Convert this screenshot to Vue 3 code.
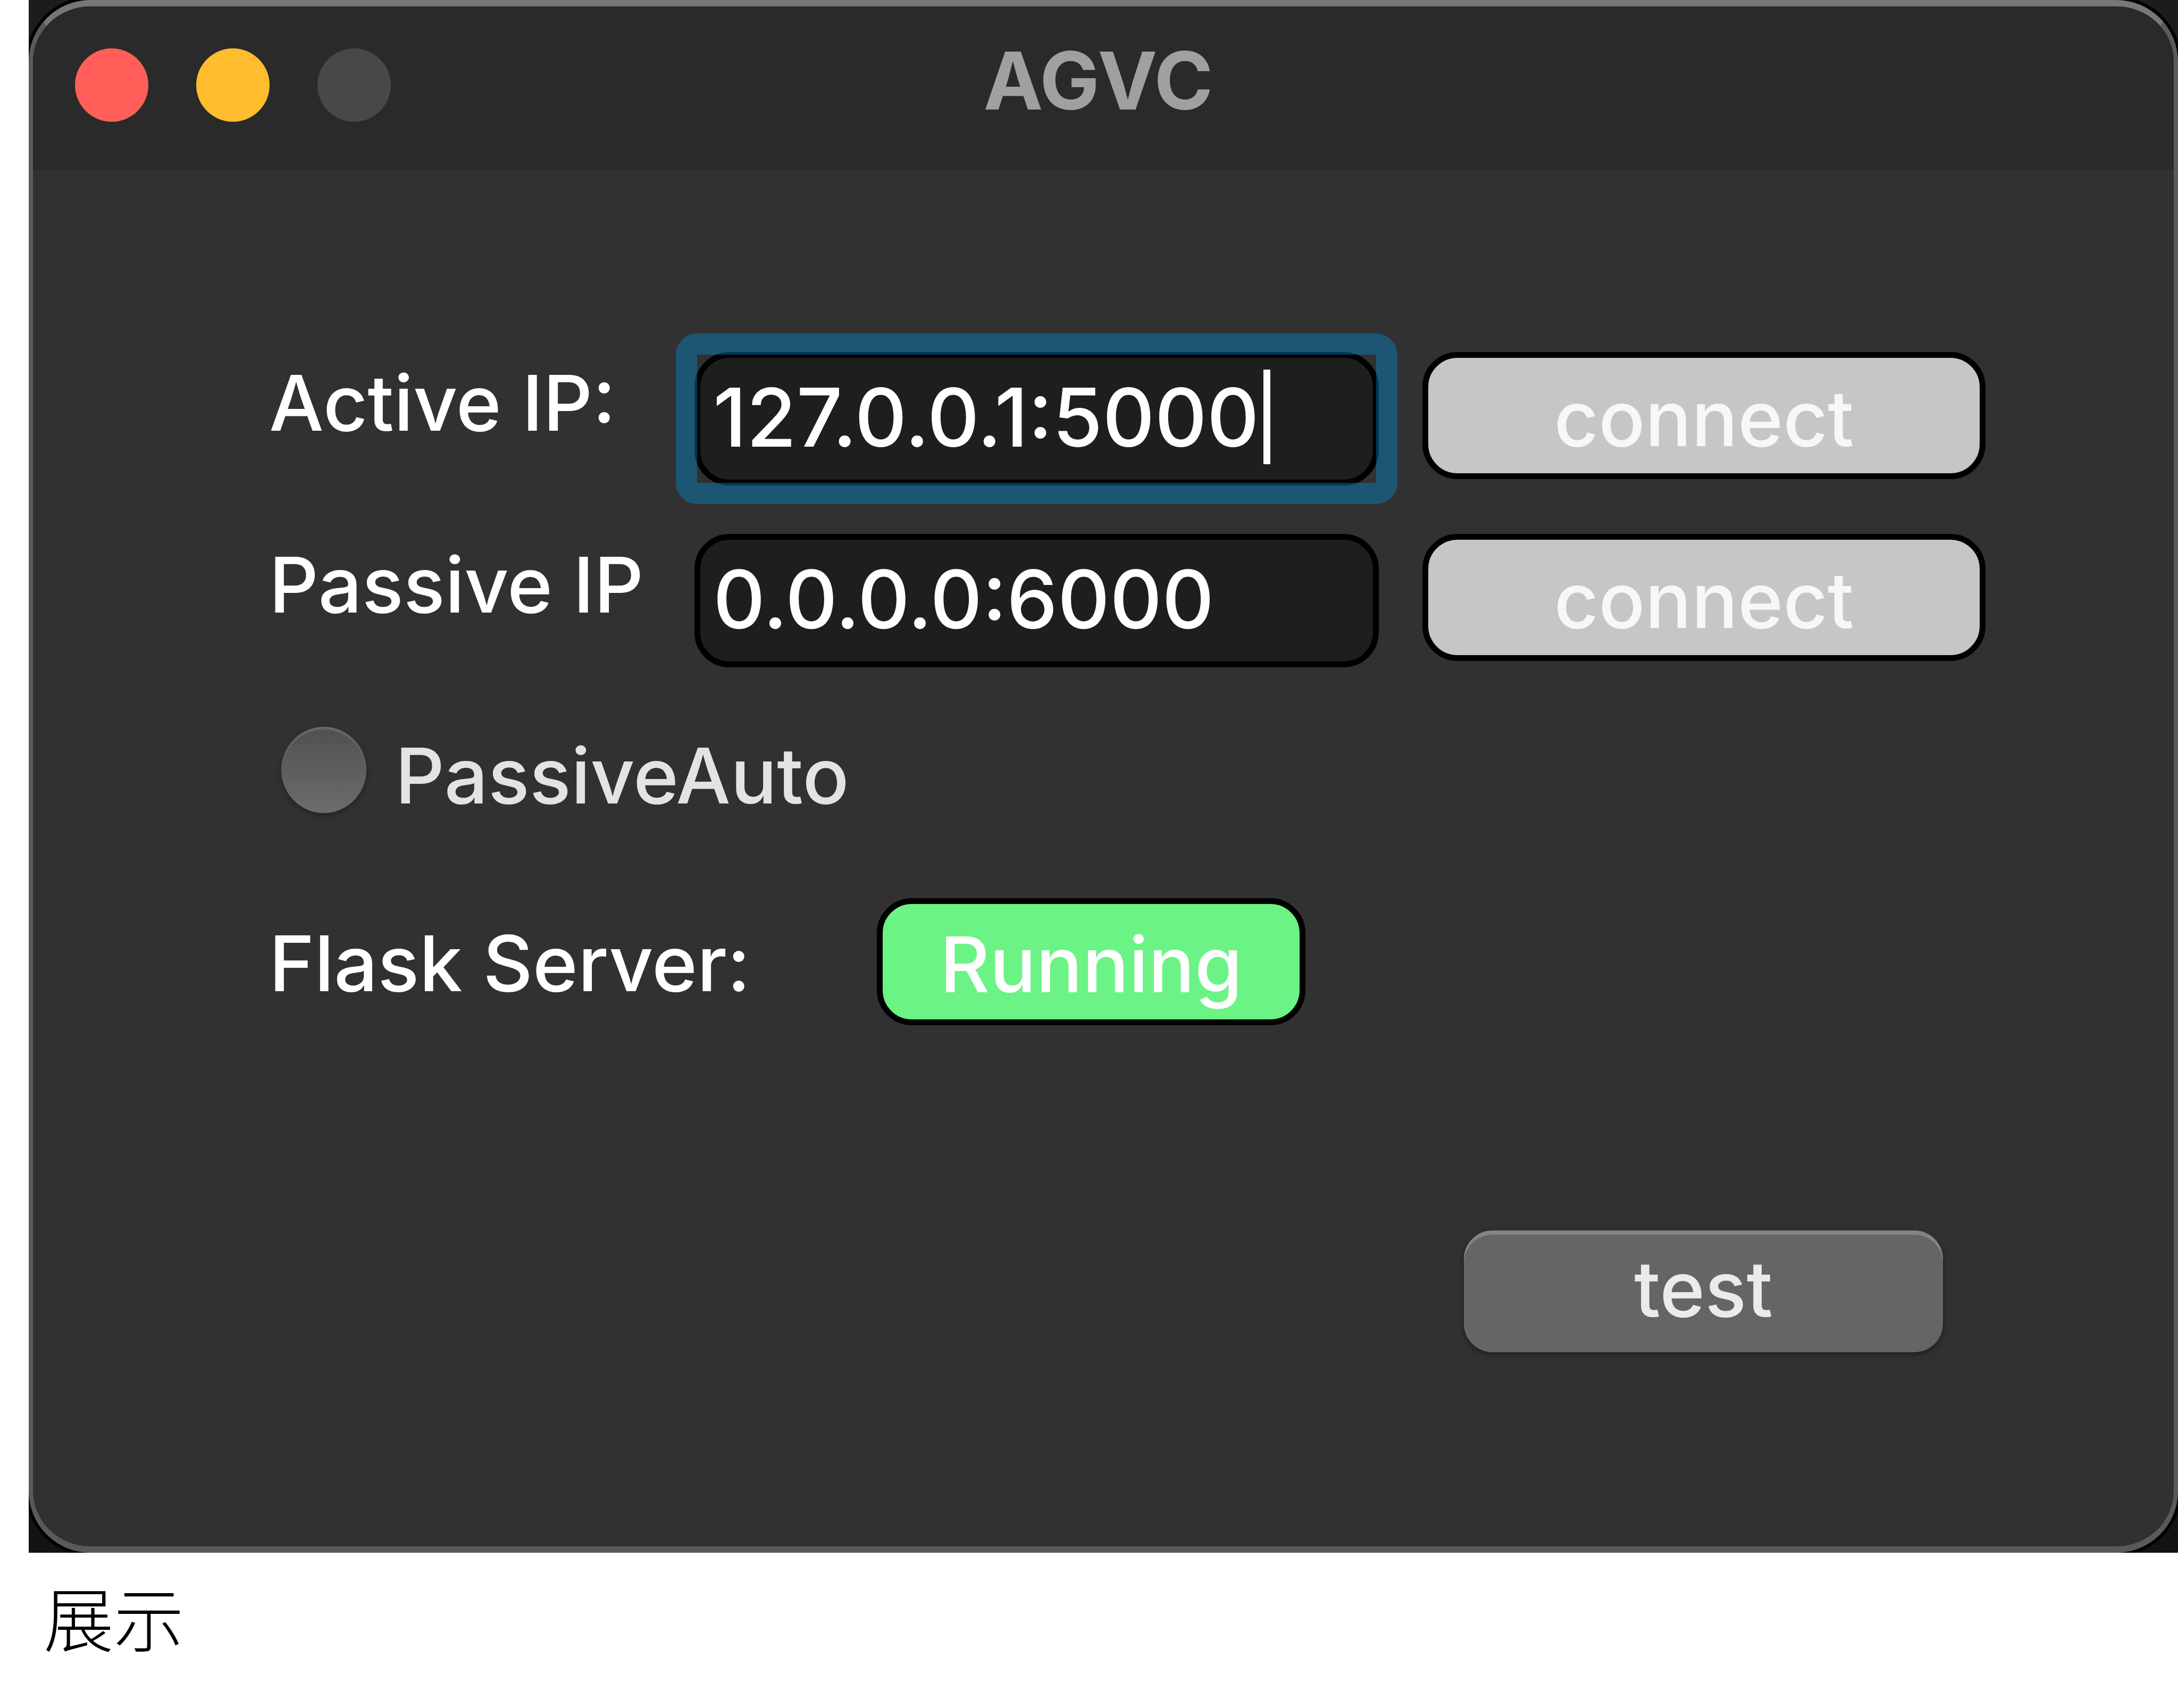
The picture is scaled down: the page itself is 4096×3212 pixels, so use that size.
<script setup>
import { ref } from 'vue'

const activeIp = ref('127.0.0.1:5000')
const passiveIp = ref('0.0.0.0:6000')
const passiveAuto = ref(false)
</script>

<template>
  <main class="page">
    <div class="backdrop">
      <section class="window">
        <header class="titlebar">
          <div class="lights">
            <button class="light close" type="button" aria-label="Close"></button>
            <button class="light minimize" type="button" aria-label="Minimize"></button>
            <button class="light zoom" type="button" aria-label="Zoom" disabled></button>
          </div>
          <h1 class="title">AGVC</h1>
        </header>

        <form class="content" @submit.prevent>
          <div class="grid">
            <label class="label clip" for="active-ip">Active IP:</label>
            <div class="field focused">
              <input id="active-ip" v-model="activeIp" class="input" type="text" />
              <span class="caret"></span>
            </div>
            <button class="button connect" type="button">connect</button>

            <label class="label clip" for="passive-ip">Passive IP</label>
            <div class="field">
              <input id="passive-ip" v-model="passiveIp" class="input" type="text" />
            </div>
            <button class="button connect" type="button">connect</button>
          </div>

          <div class="auto">
            <input id="passive-auto" v-model="passiveAuto" class="radio" type="radio" :value="true" />
            <label class="auto-label" for="passive-auto">PassiveAuto</label>
          </div>

          <div class="server">
            <span class="label server-label">Flask Server:</span>
            <button class="button running" type="button">Running</button>
          </div>

          <button class="test" type="button">test</button>
        </form>
      </section>
    </div>
    <p class="caption">展示</p>
  </main>
</template>

<style>
body {
  margin: 0;
  background: #fff;
}
</style>

<style scoped>
.page {
  display: flex;
  flex-direction: column;
  box-sizing: border-box;
  min-height: 100vh;
  padding-left: 54px;
  font: 500 145px/180px Inter, "Liberation Sans", sans-serif;
  color: #fff;
}

.page * {
  box-sizing: border-box;
}

.backdrop {
  display: flex;
  flex: 1;
  overflow: hidden;
  background: linear-gradient(#1c1c1c, #131313);
}

.window {
  display: flex;
  flex: 1;
  flex-direction: column;
  overflow: hidden;
  border: solid #5a5a5a;
  border-width: 12px 8px;
  border-top-color: #777;
  border-radius: 116px;
  background: #313131;
  box-shadow: 0 0 0 6px #000;
}

.titlebar {
  display: grid;
  grid-template-columns: 1fr auto 1fr;
  height: 307px;
  padding: 0 98px 0 79px;
  background: #2a2a2a;
}

.lights {
  display: flex;
  gap: 90px;
  padding-top: 79px;
}

.light {
  width: 138px;
  height: 138px;
  padding: 0;
  border: 0;
  border-radius: 50%;
}

.close {
  background: #ff5f58;
}

.minimize {
  background: #febc2e;
}

.zoom {
  background: #484848;
}

.title {
  margin: 50px 0 0;
  font: inherit;
  font-size: 150px;
  font-weight: 700;
  color: #a0a0a0;
}

.content {
  display: flex;
  flex: 1;
  flex-direction: column;
  padding: 343px 354px 0 444px;
}

.grid {
  display: grid;
  grid-template-columns: 718px 1287fr 1059fr;
  gap: 91px 82px;
  align-items: start;
}

.label {
  padding-top: 6px;
  white-space: nowrap;
}

.clip {
  width: 698px;
  overflow: hidden;
}

.field {
  position: relative;
}

.input {
  display: block;
  width: 100%;
  height: 251px;
  padding: 0 20px 6px 24px;
  border: 11px solid #000;
  border-radius: 66px;
  outline: 0;
  background: #1e1e1e;
  font: inherit;
  font-size: 152px;
  color: #fff;
}

.focused::after {
  position: absolute;
  inset: -35px;
  border: 40px solid rgba(0, 142, 212, 0.4);
  border-radius: 40px;
  content: "";
  pointer-events: none;
}

.caret {
  position: absolute;
  top: 33px;
  left: 1070px;
  width: 13px;
  height: 178px;
  background: #fff;
}

.button {
  height: 239px;
  padding: 10px 0 0;
  border: 11px solid #000;
  border-radius: 66px;
  font: inherit;
}

.connect {
  background: #c6c6c6;
  color: #f7f7f7;
}

.auto {
  display: flex;
  gap: 54px;
  margin-top: 112px;
  padding-left: 23px;
  color: #e3e3e3;
}

.auto-label {
  padding-top: 2px;
}

.radio {
  width: 160px;
  height: 162px;
  margin: 0;
  border-radius: 50%;
  appearance: none;
  background: linear-gradient(#505050, #6c6c6c);
  box-shadow: inset 0 6px 4px -2px #707070, 0 4px 8px #222;
}

.server {
  display: flex;
  align-items: center;
  margin-top: 140px;
}

.server-label {
  width: 1143px;
}

.running {
  width: 806px;
  background: #6cf385;
  color: #fff;
}

.test {
  align-self: flex-end;
  width: 901px;
  height: 229px;
  margin: 386px 80px 0 0;
  padding: 0 0 10px;
  border: 0;
  border-radius: 54px;
  background: #656565;
  box-shadow: inset 0 8px 0 #838383, 0 4px 10px #1e1e1e;
  font: inherit;
  color: #ebebeb;
}

.caption {
  height: 292px;
  margin: 0;
  padding: 29px 28px 0;
  font: 300 132px/180px "Noto Sans CJK SC", sans-serif;
  color: #000;
}
</style>
